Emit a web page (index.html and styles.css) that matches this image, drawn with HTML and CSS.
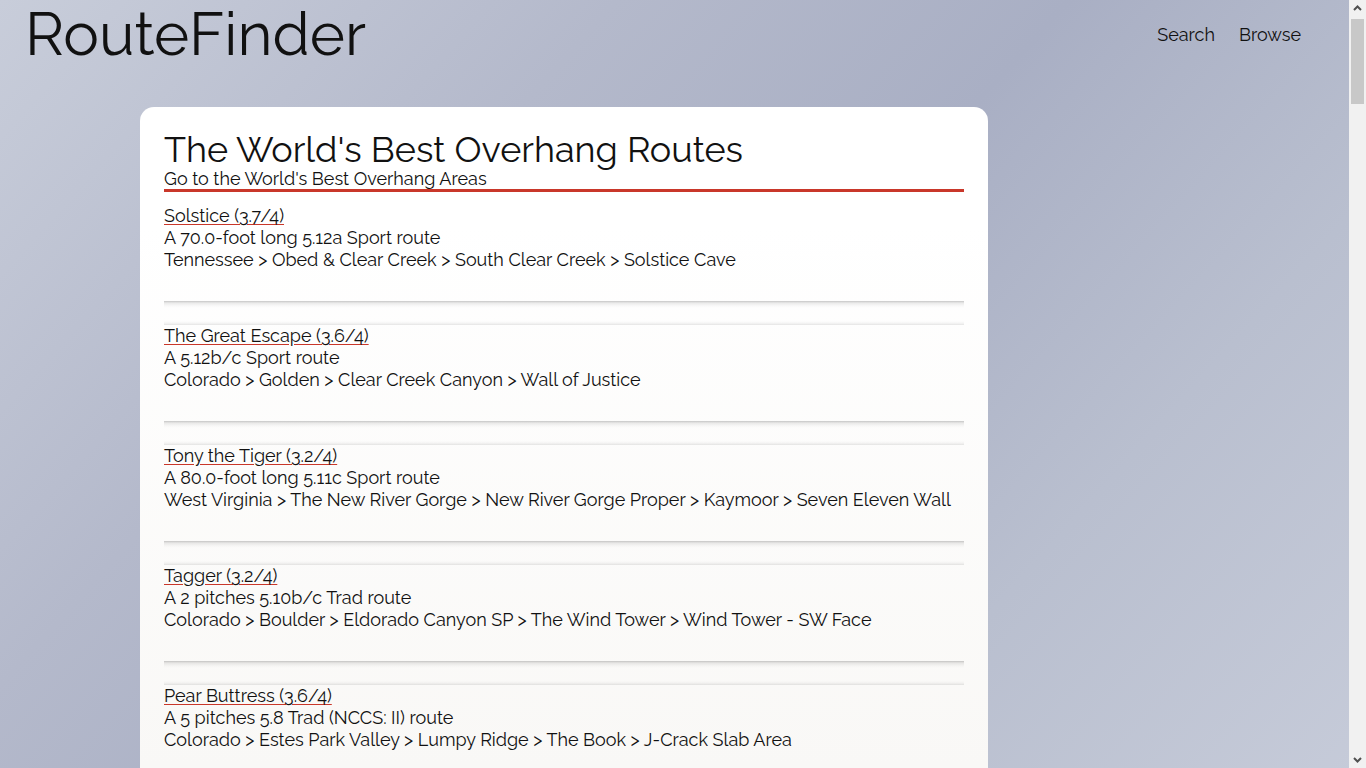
FILE: index.html
```html
<!DOCTYPE html>
<html lang="en">
<head>
<meta charset="utf-8">
<title>RouteFinder</title>
<link rel="stylesheet" href="styles.css">
</head>
<body>
<header class="topbar">
  <div class="brand">RouteFinder</div>
  <nav class="nav">
    <a class="nav-link" href="#">Search</a>
    <a class="nav-link" href="#">Browse</a>
  </nav>
</header>
<main class="card">
  <div class="card-head">
    <h1 class="card-title">The World's Best Overhang Routes</h1>
    <a class="sub-link" href="#">Go to the World's Best Overhang Areas</a>
  </div>
  <ul class="routes">
    <li class="route">
      <a class="route-name" href="#">Solstice (3.7/4)</a>
      <div class="route-line">A 70.0-foot long 5.12a Sport route</div>
      <div class="route-line">Tennessee &gt; Obed &amp; Clear Creek &gt; South Clear Creek &gt; Solstice Cave</div>
    </li>
    <li class="sep"></li>
    <li class="route">
      <a class="route-name" href="#">The Great Escape (3.6/4)</a>
      <div class="route-line">A 5.12b/c Sport route</div>
      <div class="route-line">Colorado &gt; Golden &gt; Clear Creek Canyon &gt; Wall of Justice</div>
    </li>
    <li class="sep"></li>
    <li class="route">
      <a class="route-name" href="#">Tony the Tiger (3.2/4)</a>
      <div class="route-line">A 80.0-foot long 5.11c Sport route</div>
      <div class="route-line">West Virginia &gt; The New River Gorge &gt; New River Gorge Proper &gt; Kaymoor &gt; Seven Eleven Wall</div>
    </li>
    <li class="sep"></li>
    <li class="route">
      <a class="route-name" href="#">Tagger (3.2/4)</a>
      <div class="route-line">A 2 pitches 5.10b/c Trad route</div>
      <div class="route-line">Colorado &gt; Boulder &gt; Eldorado Canyon SP &gt; The Wind Tower &gt; Wind Tower - SW Face</div>
    </li>
    <li class="sep"></li>
    <li class="route">
      <a class="route-name" href="#">Pear Buttress (3.6/4)</a>
      <div class="route-line">A 5 pitches 5.8 Trad (NCCS: II) route</div>
      <div class="route-line">Colorado &gt; Estes Park Valley &gt; Lumpy Ridge &gt; The Book &gt; J-Crack Slab Area</div>
    </li>
  </ul>
</main>
<aside class="scrollbar" aria-hidden="true">
  <div class="sb-btn">
    <svg width="17" height="17" viewBox="0 0 17 17"><path d="M5 10 L8.5 6.5 L12 10" fill="none" stroke="#505050" stroke-width="2"/></svg>
  </div>
  <div class="sb-track">
    <div class="sb-thumb"></div>
  </div>
  <div class="sb-btn">
    <svg width="17" height="17" viewBox="0 0 17 17"><path d="M5 7 L8.5 10.5 L12 7" fill="none" stroke="#505050" stroke-width="2"/></svg>
  </div>
</aside>
</body>
</html>
```

FILE: styles.css
```css
html, body {
  margin: 0;
  padding: 0;
}

body {
  font-family: "Raleway", "Lato", "Liberation Sans", sans-serif;
  color: #111;
  background: linear-gradient(132deg, #c8cdda 0%, #b4b9cb 30%, #a9afc4 52%, #b9bfcf 75%, #c6cbd9 100%);
  background-attachment: fixed;
  min-height: 100vh;
  padding-right: 17px;
}

.topbar {
  display: flex;
  justify-content: space-between;
  align-items: flex-start;
  padding: 0 48px 0 25px;
  height: 107px;
}

.brand {
  font-size: 60px;
  line-height: 66px;
  font-weight: 400;
  color: #111;
  margin-top: 1px;
}

.nav {
  display: flex;
  gap: 24px;
  padding-top: 24px;
}

.nav-link {
  font-size: 18px;
  line-height: 22px;
  color: #111;
  text-decoration: none;
}

.card {
  display: block;
  margin: 0 0 40px 140px;
  width: 848px;
  box-sizing: border-box;
  padding: 24px 24px 24px 24px;
  min-height: 6400px;
  border-radius: 14px;
  background-color: #f8f7f5;
  background-image: linear-gradient(to bottom, #ffffff 0px, #ffffff 120px, #f9f8f6 660px);
  background-size: 100% 700px;
  background-repeat: no-repeat;
}

.card-head {
  border-bottom: 3px solid #c9372a;
}

.card-title {
  margin: 0;
  font-size: 36px;
  line-height: 37px;
  font-weight: 400;
}

.sub-link {
  display: block;
  font-size: 18px;
  line-height: 21px;
  color: #111;
  text-decoration: none;
}

.routes {
  list-style: none;
  margin: 13px 0 0 0;
  padding: 0;
}

.route {
  padding-bottom: 30px;
  font-size: 18px;
  line-height: 22px;
}

.route-name {
  color: #111;
  text-decoration: underline;
  text-decoration-color: #c9372a;
  text-underline-offset: 2px;
}

.route-line {
  white-space: nowrap;
}

.sep {
  height: 24px;
  background: linear-gradient(to bottom,
    rgba(0, 0, 0, 0.22) 0px,
    rgba(0, 0, 0, 0.08) 2px,
    rgba(0, 0, 0, 0.02) 5px,
    rgba(0, 0, 0, 0) 7px,
    rgba(0, 0, 0, 0) 20px,
    rgba(0, 0, 0, 0.03) 22px,
    rgba(0, 0, 0, 0.1) 24px);
}

.scrollbar {
  position: fixed;
  top: 0;
  right: 0;
  width: 17px;
  height: 100vh;
  background: #f1f1f1;
  display: flex;
  flex-direction: column;
}

.sb-btn {
  height: 17px;
  flex: none;
}

.sb-btn svg {
  display: block;
}

.sb-track {
  flex: 1;
  padding: 2px 2px 0 2px;
}

.sb-thumb {
  height: 85px;
  background: #c8c8c8;
}
```
